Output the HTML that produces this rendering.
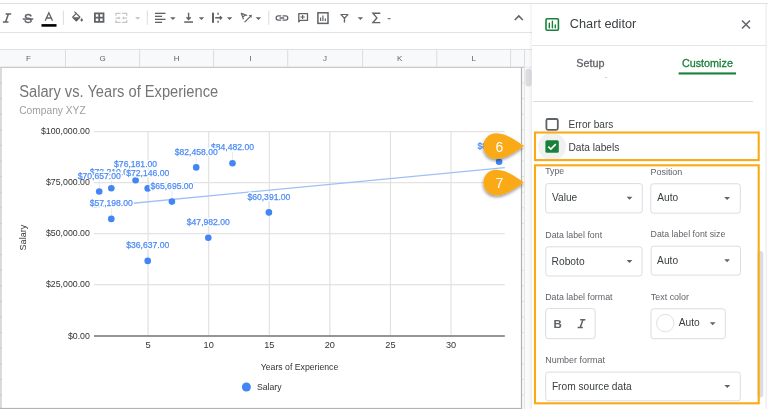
<!DOCTYPE html>
<html><head><meta charset="utf-8"><style>
html,body{margin:0;padding:0;width:768px;height:409px;overflow:hidden;background:#fff}
svg{display:block;will-change:transform;font-family:"Liberation Sans", sans-serif}
</style></head><body>
<svg width="768" height="409" viewBox="0 0 768 409">
<rect x="0" y="0" width="768" height="409" fill="#fff"/>
<rect x="0" y="3" width="768" height="1" fill="#dfe1e5"/>
<rect x="0" y="32" width="532" height="1" fill="#e3e3e3"/>
<rect x="0" y="49" width="532" height="1" fill="#e0e0e0"/>
<rect x="0" y="50" width="532" height="17" fill="#f8f9fa"/>
<rect x="0" y="66.8" width="524.5" height="1" fill="#b8b8b8"/>
<rect x="0" y="67.8" width="522" height="1" fill="#d0d0d0"/>
<rect x="524.5" y="66.8" width="8" height="1" fill="#e6e6e6"/>
<rect x="65.0" y="50" width="1" height="17" fill="#dadce0"/>
<rect x="139.1" y="50" width="1" height="17" fill="#dadce0"/>
<rect x="213.1" y="50" width="1" height="17" fill="#dadce0"/>
<rect x="287.2" y="50" width="1" height="17" fill="#dadce0"/>
<rect x="362.1" y="50" width="1" height="17" fill="#dadce0"/>
<rect x="436.3" y="50" width="1" height="17" fill="#dadce0"/>
<rect x="510.1" y="50" width="1" height="17" fill="#dadce0"/>
<rect x="524.0" y="50" width="1" height="17" fill="#dadce0"/>
<text x="28.4" y="61.2" font-size="8" fill="#5f6368" text-anchor="middle">F</text>
<text x="102.5" y="61.2" font-size="8" fill="#5f6368" text-anchor="middle">G</text>
<text x="176.6" y="61.2" font-size="8" fill="#5f6368" text-anchor="middle">H</text>
<text x="250.6" y="61.2" font-size="8" fill="#5f6368" text-anchor="middle">I</text>
<text x="325.1" y="61.2" font-size="8" fill="#5f6368" text-anchor="middle">J</text>
<text x="399.7" y="61.2" font-size="8" fill="#5f6368" text-anchor="middle">K</text>
<text x="473.7" y="61.2" font-size="8" fill="#5f6368" text-anchor="middle">L</text>
<rect x="522" y="68" width="10" height="341" fill="#fafafa"/>
<rect x="522" y="82.5" width="2.5" height="1" fill="#e2e2e2"/>
<rect x="522" y="98.1" width="2.5" height="1" fill="#e2e2e2"/>
<rect x="522" y="113.7" width="2.5" height="1" fill="#e2e2e2"/>
<rect x="522" y="129.3" width="2.5" height="1" fill="#e2e2e2"/>
<rect x="522" y="144.9" width="2.5" height="1" fill="#e2e2e2"/>
<rect x="522" y="160.5" width="2.5" height="1" fill="#e2e2e2"/>
<rect x="522" y="176.1" width="2.5" height="1" fill="#e2e2e2"/>
<rect x="522" y="191.7" width="2.5" height="1" fill="#e2e2e2"/>
<rect x="522" y="207.3" width="2.5" height="1" fill="#e2e2e2"/>
<rect x="522" y="222.9" width="2.5" height="1" fill="#e2e2e2"/>
<rect x="522" y="238.5" width="2.5" height="1" fill="#e2e2e2"/>
<rect x="522" y="254.1" width="2.5" height="1" fill="#e2e2e2"/>
<rect x="522" y="269.7" width="2.5" height="1" fill="#e2e2e2"/>
<rect x="522" y="285.3" width="2.5" height="1" fill="#e2e2e2"/>
<rect x="522" y="300.9" width="2.5" height="1" fill="#e2e2e2"/>
<rect x="522" y="316.5" width="2.5" height="1" fill="#e2e2e2"/>
<rect x="522" y="332.1" width="2.5" height="1" fill="#e2e2e2"/>
<rect x="522" y="347.7" width="2.5" height="1" fill="#e2e2e2"/>
<rect x="522" y="363.3" width="2.5" height="1" fill="#e2e2e2"/>
<rect x="522" y="378.9" width="2.5" height="1" fill="#e2e2e2"/>
<rect x="522" y="394.5" width="2.5" height="1" fill="#e2e2e2"/>
<rect x="522" y="410.1" width="2.5" height="1" fill="#e2e2e2"/>
<rect x="524" y="68" width="1" height="341" fill="#e6e6e6"/>
<rect x="525.4" y="68.8" width="6.2" height="17.8" rx="3" fill="#dadce0"/>
<rect x="0" y="68" width="522" height="341" fill="#fff"/>
<rect x="0" y="67.8" width="1.9" height="341.2" fill="#d9d9d9"/>
<rect x="0" y="82.5" width="1.9" height="1" fill="#c9c9c9"/>
<rect x="0" y="98.1" width="1.9" height="1" fill="#c9c9c9"/>
<rect x="0" y="113.7" width="1.9" height="1" fill="#c9c9c9"/>
<rect x="0" y="129.3" width="1.9" height="1" fill="#c9c9c9"/>
<rect x="0" y="144.9" width="1.9" height="1" fill="#c9c9c9"/>
<rect x="0" y="160.5" width="1.9" height="1" fill="#c9c9c9"/>
<rect x="0" y="176.1" width="1.9" height="1" fill="#c9c9c9"/>
<rect x="0" y="191.7" width="1.9" height="1" fill="#c9c9c9"/>
<rect x="0" y="207.3" width="1.9" height="1" fill="#c9c9c9"/>
<rect x="0" y="222.9" width="1.9" height="1" fill="#c9c9c9"/>
<rect x="0" y="238.5" width="1.9" height="1" fill="#c9c9c9"/>
<rect x="0" y="254.1" width="1.9" height="1" fill="#c9c9c9"/>
<rect x="0" y="269.7" width="1.9" height="1" fill="#c9c9c9"/>
<rect x="0" y="285.3" width="1.9" height="1" fill="#c9c9c9"/>
<rect x="0" y="300.9" width="1.9" height="1" fill="#c9c9c9"/>
<rect x="0" y="316.5" width="1.9" height="1" fill="#c9c9c9"/>
<rect x="0" y="332.1" width="1.9" height="1" fill="#c9c9c9"/>
<rect x="0" y="347.7" width="1.9" height="1" fill="#c9c9c9"/>
<rect x="0" y="363.3" width="1.9" height="1" fill="#c9c9c9"/>
<rect x="0" y="378.9" width="1.9" height="1" fill="#c9c9c9"/>
<rect x="0" y="394.5" width="1.9" height="1" fill="#c9c9c9"/>
<rect x="0" y="410.1" width="1.9" height="1" fill="#c9c9c9"/>
<rect x="520.9" y="67.8" width="1.2" height="341.2" fill="#b2b2b2"/>
<rect x="0" y="407.9" width="522" height="1.1" fill="#b4b4b4"/>
<text x="19.2" y="97.3" font-size="16" fill="#757575" textLength="199" lengthAdjust="spacingAndGlyphs">Salary vs. Years of Experience</text>
<text x="19.2" y="114.3" font-size="11" fill="#9e9e9e" textLength="66.5" lengthAdjust="spacingAndGlyphs">Company XYZ</text>
<rect x="94" y="131.0" width="410.8" height="1.2" fill="#e2e2e2"/>
<rect x="94" y="182.05" width="410.8" height="1.2" fill="#e2e2e2"/>
<rect x="94" y="233.05" width="410.8" height="1.2" fill="#e2e2e2"/>
<rect x="94" y="284.09999999999997" width="410.8" height="1.2" fill="#e2e2e2"/>
<rect x="147.50" y="131.6" width="1.2" height="204" fill="#e2e2e2"/>
<rect x="208.09" y="131.6" width="1.2" height="204" fill="#e2e2e2"/>
<rect x="268.68" y="131.6" width="1.2" height="204" fill="#e2e2e2"/>
<rect x="329.27" y="131.6" width="1.2" height="204" fill="#e2e2e2"/>
<rect x="389.86" y="131.6" width="1.2" height="204" fill="#e2e2e2"/>
<rect x="450.45" y="131.6" width="1.2" height="204" fill="#e2e2e2"/>
<rect x="94" y="335.1" width="410.8" height="1.8" fill="#8a8a8a"/>
<line x1="94" y1="207.0" x2="504.8" y2="167.6" stroke="#9fc0f6" stroke-width="1.3"/>
<rect x="98.8" y="180.5" width="0.8" height="8" fill="#e4e4e4"/>
<rect x="110.9" y="177.3" width="0.8" height="8" fill="#e4e4e4"/>
<rect x="135.2" y="169.2" width="0.8" height="8" fill="#e4e4e4"/>
<rect x="147.3" y="177.4" width="0.8" height="8" fill="#e4e4e4"/>
<rect x="171.5" y="190.6" width="0.8" height="8" fill="#e4e4e4"/>
<rect x="110.9" y="207.9" width="0.8" height="8" fill="#e4e4e4"/>
<rect x="195.8" y="156.4" width="0.8" height="8" fill="#e4e4e4"/>
<rect x="232.1" y="152.3" width="0.8" height="8" fill="#e4e4e4"/>
<rect x="147.3" y="249.9" width="0.8" height="8" fill="#e4e4e4"/>
<rect x="207.9" y="226.8" width="0.8" height="8" fill="#e4e4e4"/>
<rect x="268.5" y="201.4" width="0.8" height="8" fill="#e4e4e4"/>
<rect x="498.7" y="150.8" width="0.8" height="8" fill="#e4e4e4"/>
<circle cx="99.2" cy="191.5" r="3.3" fill="#4285f4"/>
<circle cx="111.3" cy="188.3" r="3.3" fill="#4285f4"/>
<circle cx="135.6" cy="180.2" r="3.3" fill="#4285f4"/>
<circle cx="147.7" cy="188.4" r="3.3" fill="#4285f4"/>
<circle cx="171.9" cy="201.6" r="3.3" fill="#4285f4"/>
<circle cx="111.3" cy="218.9" r="3.3" fill="#4285f4"/>
<circle cx="196.2" cy="167.4" r="3.3" fill="#4285f4"/>
<circle cx="232.5" cy="163.3" r="3.3" fill="#4285f4"/>
<circle cx="147.7" cy="260.9" r="3.3" fill="#4285f4"/>
<circle cx="208.3" cy="237.8" r="3.3" fill="#4285f4"/>
<circle cx="268.9" cy="212.4" r="3.3" fill="#4285f4"/>
<circle cx="499.1" cy="161.8" r="3.3" fill="#4285f4"/>
<text x="111.3" y="175.4" font-size="9.5" fill="#fff" text-anchor="middle" textLength="43" lengthAdjust="spacingAndGlyphs" stroke="#fff" stroke-width="3" stroke-linejoin="round">$72,210.00</text>
<text x="111.3" y="175.4" font-size="9.5" fill="#4c8bf4" text-anchor="middle" textLength="43" lengthAdjust="spacingAndGlyphs" stroke="#4c8bf4" stroke-width="0.25">$72,210.00</text>
<text x="232.5" y="150.4" font-size="9.5" fill="#fff" text-anchor="middle" textLength="43" lengthAdjust="spacingAndGlyphs" stroke="#fff" stroke-width="3" stroke-linejoin="round">$84,482.00</text>
<text x="232.5" y="150.4" font-size="9.5" fill="#4c8bf4" text-anchor="middle" textLength="43" lengthAdjust="spacingAndGlyphs" stroke="#4c8bf4" stroke-width="0.25">$84,482.00</text>
<text x="99.2" y="178.6" font-size="9.5" fill="#fff" text-anchor="middle" textLength="43" lengthAdjust="spacingAndGlyphs" stroke="#fff" stroke-width="3" stroke-linejoin="round">$70,657.00</text>
<text x="99.2" y="178.6" font-size="9.5" fill="#4c8bf4" text-anchor="middle" textLength="43" lengthAdjust="spacingAndGlyphs" stroke="#4c8bf4" stroke-width="0.25">$70,657.00</text>
<text x="147.7" y="175.5" font-size="9.5" fill="#fff" text-anchor="middle" textLength="43" lengthAdjust="spacingAndGlyphs" stroke="#fff" stroke-width="3" stroke-linejoin="round">$72,146.00</text>
<text x="147.7" y="175.5" font-size="9.5" fill="#4c8bf4" text-anchor="middle" textLength="43" lengthAdjust="spacingAndGlyphs" stroke="#4c8bf4" stroke-width="0.25">$72,146.00</text>
<text x="135.6" y="167.3" font-size="9.5" fill="#fff" text-anchor="middle" textLength="43" lengthAdjust="spacingAndGlyphs" stroke="#fff" stroke-width="3" stroke-linejoin="round">$76,181.00</text>
<text x="135.6" y="167.3" font-size="9.5" fill="#4c8bf4" text-anchor="middle" textLength="43" lengthAdjust="spacingAndGlyphs" stroke="#4c8bf4" stroke-width="0.25">$76,181.00</text>
<text x="171.9" y="188.7" font-size="9.5" fill="#fff" text-anchor="middle" textLength="43" lengthAdjust="spacingAndGlyphs" stroke="#fff" stroke-width="3" stroke-linejoin="round">$65,695.00</text>
<text x="171.9" y="188.7" font-size="9.5" fill="#4c8bf4" text-anchor="middle" textLength="43" lengthAdjust="spacingAndGlyphs" stroke="#4c8bf4" stroke-width="0.25">$65,695.00</text>
<text x="111.3" y="206.0" font-size="9.5" fill="#fff" text-anchor="middle" textLength="43" lengthAdjust="spacingAndGlyphs" stroke="#fff" stroke-width="3" stroke-linejoin="round">$57,198.00</text>
<text x="111.3" y="206.0" font-size="9.5" fill="#4c8bf4" text-anchor="middle" textLength="43" lengthAdjust="spacingAndGlyphs" stroke="#4c8bf4" stroke-width="0.25">$57,198.00</text>
<text x="196.2" y="154.5" font-size="9.5" fill="#fff" text-anchor="middle" textLength="43" lengthAdjust="spacingAndGlyphs" stroke="#fff" stroke-width="3" stroke-linejoin="round">$82,458.00</text>
<text x="196.2" y="154.5" font-size="9.5" fill="#4c8bf4" text-anchor="middle" textLength="43" lengthAdjust="spacingAndGlyphs" stroke="#4c8bf4" stroke-width="0.25">$82,458.00</text>
<text x="147.7" y="248.0" font-size="9.5" fill="#fff" text-anchor="middle" textLength="43" lengthAdjust="spacingAndGlyphs" stroke="#fff" stroke-width="3" stroke-linejoin="round">$36,637.00</text>
<text x="147.7" y="248.0" font-size="9.5" fill="#4c8bf4" text-anchor="middle" textLength="43" lengthAdjust="spacingAndGlyphs" stroke="#4c8bf4" stroke-width="0.25">$36,637.00</text>
<text x="208.3" y="224.9" font-size="9.5" fill="#fff" text-anchor="middle" textLength="43" lengthAdjust="spacingAndGlyphs" stroke="#fff" stroke-width="3" stroke-linejoin="round">$47,982.00</text>
<text x="208.3" y="224.9" font-size="9.5" fill="#4c8bf4" text-anchor="middle" textLength="43" lengthAdjust="spacingAndGlyphs" stroke="#4c8bf4" stroke-width="0.25">$47,982.00</text>
<text x="268.9" y="199.5" font-size="9.5" fill="#fff" text-anchor="middle" textLength="43" lengthAdjust="spacingAndGlyphs" stroke="#fff" stroke-width="3" stroke-linejoin="round">$60,391.00</text>
<text x="268.9" y="199.5" font-size="9.5" fill="#4c8bf4" text-anchor="middle" textLength="43" lengthAdjust="spacingAndGlyphs" stroke="#4c8bf4" stroke-width="0.25">$60,391.00</text>
<text x="499.1" y="148.9" font-size="9.5" fill="#fff" text-anchor="middle" textLength="43" lengthAdjust="spacingAndGlyphs" stroke="#fff" stroke-width="3" stroke-linejoin="round">$85,196.00</text>
<text x="499.1" y="148.9" font-size="9.5" fill="#4c8bf4" text-anchor="middle" textLength="43" lengthAdjust="spacingAndGlyphs" stroke="#4c8bf4" stroke-width="0.25">$85,196.00</text>
<text x="89.9" y="134.2" font-size="9.6" fill="#333" text-anchor="end" textLength="49" lengthAdjust="spacingAndGlyphs">$100,000.00</text>
<text x="89.9" y="185.3" font-size="9.6" fill="#333" text-anchor="end" textLength="44" lengthAdjust="spacingAndGlyphs">$75,000.00</text>
<text x="89.9" y="236.3" font-size="9.6" fill="#333" text-anchor="end" textLength="44" lengthAdjust="spacingAndGlyphs">$50,000.00</text>
<text x="89.9" y="287.4" font-size="9.6" fill="#333" text-anchor="end" textLength="44" lengthAdjust="spacingAndGlyphs">$25,000.00</text>
<text x="89.9" y="338.7" font-size="9.6" fill="#333" text-anchor="end" textLength="22" lengthAdjust="spacingAndGlyphs">$0.00</text>
<text x="148.1" y="347.9" font-size="9.4" fill="#333" text-anchor="middle">5</text>
<text x="208.69" y="347.9" font-size="9.4" fill="#333" text-anchor="middle" textLength="10.2" lengthAdjust="spacingAndGlyphs">10</text>
<text x="269.28" y="347.9" font-size="9.4" fill="#333" text-anchor="middle" textLength="10.2" lengthAdjust="spacingAndGlyphs">15</text>
<text x="329.87" y="347.9" font-size="9.4" fill="#333" text-anchor="middle" textLength="10.2" lengthAdjust="spacingAndGlyphs">20</text>
<text x="390.46" y="347.9" font-size="9.4" fill="#333" text-anchor="middle" textLength="10.2" lengthAdjust="spacingAndGlyphs">25</text>
<text x="451.05" y="347.9" font-size="9.4" fill="#333" text-anchor="middle" textLength="10.2" lengthAdjust="spacingAndGlyphs">30</text>
<text x="299.5" y="369.5" font-size="9.6" fill="#333" text-anchor="middle" textLength="77.5" lengthAdjust="spacingAndGlyphs">Years of Experience</text>
<text x="0" y="0" font-size="9.6" fill="#333" text-anchor="middle" textLength="25.6" lengthAdjust="spacingAndGlyphs" transform="translate(25.7 237.6) rotate(-90)">Salary</text>
<circle cx="246.4" cy="387" r="4.5" fill="#4285f4"/>
<text x="256.9" y="389.8" font-size="9.6" fill="#333" textLength="24.6" lengthAdjust="spacingAndGlyphs">Salary</text>
<path d="M5.6 13.9h5.6M2.9 22.1h5.6M8.4 13.9l-2.8 8.2" stroke="#5f6368" stroke-width="1.5" fill="none"/>
<text x="28" y="22.8" font-size="12.3" fill="#5f6368" stroke="#5f6368" stroke-width="0.45" text-anchor="middle">S</text>
<rect x="22.8" y="18.3" width="10.4" height="1.5" fill="#5f6368"/>
<path d="M45.2 20.7l3.65-7.9 3.65 7.9M46.5 18h4.7" stroke="#5f6368" stroke-width="1.3" fill="none"/>
<rect x="41.5" y="24.1" width="15" height="2.6" fill="#000"/>
<rect x="62.9" y="10.5" width="1" height="14.3" fill="#dadce0"/>
<rect x="146.8" y="10.5" width="1" height="14.3" fill="#dadce0"/>
<rect x="268.3" y="10.5" width="1" height="14.3" fill="#dadce0"/>
<path fill-rule="evenodd" d="M16.56 8.94L7.62 0 6.21 1.41l2.38 2.38-5.15 5.15c-.59.59-.59 1.54 0 2.12l5.5 5.5c.29.29.68.44 1.06.44s.77-.15 1.06-.44l5.5-5.5c.59-.58.59-1.53 0-2.12zM5.21 10L10 5.21 14.79 10H5.21zM19 11.5s-2 2.170-2 3.5c0 1.1.9 2 2 2s2-.9 2-2c0-1.33-2-3.5-2-3.5z" fill="#5f6368" transform="translate(70.3 11.2) scale(0.6)"/>
<path d="M94.9 13.4h8.6v8.4h-8.6zM99.2 13.4v8.4M94.9 17.6h8.6" stroke="#5f6368" stroke-width="1.8" fill="none"/>
<path d="M115.9 15.8v-2.4h4.7M122.1 13.4h4.6v2.4M126.7 20v2.3h-4.6M120.6 22.3h-4.7V20M115.5 18h3.6M127 18h-3.6" stroke="#c4c6c8" stroke-width="1.25" fill="none"/>
<path d="M118.6 16.3l2 1.7-2 1.7zM123.9 16.3l-2 1.7 2 1.7z" fill="#c4c6c8"/>
<path d="M135.1 17l2.55 2.7 2.55-2.7z" fill="#c4c6c8"/>
<rect x="155" y="12.700000000000001" width="10.5" height="1.3" fill="#5f6368"/>
<rect x="155" y="15.700000000000001" width="7.099999999999994" height="1.3" fill="#5f6368"/>
<rect x="155" y="18.7" width="10.5" height="1.3" fill="#5f6368"/>
<rect x="155" y="21.7" width="7.099999999999994" height="1.3" fill="#5f6368"/>
<path d="M170.2 17.2h5.4l-2.7 2.7z" fill="#5f6368"/>
<path d="M198.8 17.2h5.4l-2.7 2.7z" fill="#5f6368"/>
<path d="M226.9 17.2h5.4l-2.7 2.7z" fill="#5f6368"/>
<path d="M255.7 17.2h5.4l-2.7 2.7z" fill="#5f6368"/>
<path d="M357.7 17.2h5.4l-2.7 2.7z" fill="#5f6368"/>
<path d="M387 18h4.3l-2.15 1.8z" fill="#80868b"/>
<path d="M188.6 12.7v6M186.5 17.2l2.1 2.3 2.1-2.3" stroke="#5f6368" stroke-width="1.4" fill="none"/>
<rect x="184.2" y="21.3" width="8.8" height="1.5" fill="#5f6368"/>
<rect x="212" y="12.7" width="2" height="10.1" fill="#5f6368"/>
<path d="M218.1 12.7v2M218.1 20.8v2M215.2 17.8h6.3M219.9 16.2l1.7 1.6-1.7 1.6" stroke="#5f6368" stroke-width="1.4" fill="none"/>
<path d="M243.5 19.3L241.3 13.4 247.2 15.5M242.6 16.9l2.5-1.6M244.6 22.2l5.6-5.6" stroke="#5f6368" stroke-width="1.2" fill="none" stroke-linejoin="round"/>
<path d="M251.9 14.7l-3.3.5 2.8 2.8z" fill="#5f6368"/>
<path d="M281.2 15.95H278.2a2.05 2.05 0 0 0 0 4.1H281.2M282.6 15.95H285.7a2.05 2.05 0 0 1 0 4.1H282.6M279.6 18H284.2" stroke="#5f6368" stroke-width="1.3" fill="none"/>
<path d="M298.8 13.7h8.7v6.6h-7.3l-1.4 1.6z" stroke="#5f6368" stroke-width="1.3" fill="none" stroke-linejoin="round"/>
<path d="M302.6 14.9v4.2M300.4 17h4.4" stroke="#5f6368" stroke-width="1.2" fill="none"/>
<rect x="317.9" y="12.8" width="10.1" height="10.6" fill="none" stroke="#5f6368" stroke-width="1.5"/>
<path d="M320.6 17.6v3.3M322.9 15.6v5.3M325.3 18.4v2.5" stroke="#5f6368" stroke-width="1.2" fill="none"/>
<path d="M341 14.5h6.9l-3.45 3.9z" stroke="#5f6368" stroke-width="1.2" fill="none" stroke-linejoin="round"/>
<path d="M344.45 18.3v4.2" stroke="#5f6368" stroke-width="1.4" fill="none"/>
<path d="M380.3 13.2h-7.4l4 4.7-4 4.7h7.4" stroke="#5f6368" stroke-width="1.4" fill="none"/>
<path d="M514.8 20l4-4 4 4" stroke="#5f6368" stroke-width="1.6" fill="none"/>
<defs><linearGradient id="sh" x1="0" x2="1"><stop offset="0" stop-color="#000" stop-opacity="0"/><stop offset="1" stop-color="#000" stop-opacity="0.05"/></linearGradient><filter id="ds" x="-30%" y="-30%" width="160%" height="170%"><feDropShadow dx="-0.4" dy="1.8" stdDeviation="1.4" flood-color="#000" flood-opacity="0.42"/></filter></defs>
<rect x="528.5" y="3.5" width="3.5" height="406" fill="url(#sh)"/>
<rect x="532" y="4" width="236" height="405" fill="#fff"/>
<rect x="765.6" y="4" width="1.1" height="405" fill="#e8eaed"/>
<rect x="546" y="18.7" width="12.4" height="11.6" rx="1.2" fill="none" stroke="#188038" stroke-width="1.6"/>
<path d="M549.3 23.2v4.6M552.4 21.3v6.5M555.3 25v2.8" stroke="#188038" stroke-width="1.4" fill="none" stroke-linecap="round"/>
<text x="569.8" y="27.8" font-size="12" fill="#3c4043" textLength="66.5" lengthAdjust="spacingAndGlyphs">Chart editor</text>
<path d="M742 20.5l8 8M750 20.5l-8 8" stroke="#5f6368" stroke-width="1.5" fill="none"/>
<rect x="532" y="45" width="234" height="1" fill="#e3e5e8"/>
<text x="576.3" y="66.7" font-size="11.5" fill="#5f6368" textLength="28.2" lengthAdjust="spacingAndGlyphs" stroke="#5f6368" stroke-width="0.3">Setup</text>
<rect x="605.5" y="77" width="1" height="1" fill="#9aa0a6"/>
<text x="681.9" y="66.7" font-size="11.5" fill="#188038" textLength="51" lengthAdjust="spacingAndGlyphs" stroke="#188038" stroke-width="0.3">Customize</text>
<rect x="678.6" y="72.4" width="57.4" height="2.1" fill="#188038"/>
<rect x="533" y="101" width="220" height="1" fill="#dadce0"/>
<rect x="757.5" y="251" width="5.8" height="146.4" rx="2.9" fill="#dadce0"/>
<rect x="546.4" y="119" width="11.4" height="10.8" rx="1.5" fill="none" stroke="#5f6368" stroke-width="1.8"/>
<text x="568.5" y="128.2" font-size="11" fill="#3c4043" textLength="44.8" lengthAdjust="spacingAndGlyphs">Error bars</text>
<circle cx="552.1" cy="146.6" r="14" fill="#f0f1f1"/>
<rect x="545.4" y="140.2" width="13.4" height="12.6" rx="1.6" fill="#188038"/>
<path d="M548.3 146.6l2.6 2.5 4.9-5" stroke="#fff" stroke-width="1.6" fill="none"/>
<text x="568.5" y="150.5" font-size="11" fill="#3c4043" textLength="50.8" lengthAdjust="spacingAndGlyphs">Data labels</text>
<text x="545.2" y="174.4" font-size="9" fill="#5f6368" textLength="18.9" lengthAdjust="spacingAndGlyphs">Type</text>
<text x="650.5" y="174.7" font-size="9" fill="#5f6368" textLength="31.8" lengthAdjust="spacingAndGlyphs">Position</text>
<rect x="545.7" y="183.6" width="96.59999999999991" height="29.30000000000001" rx="2.5" fill="#fff" stroke="#dadce0" stroke-width="1"/>
<text x="552" y="201.4" font-size="11" fill="#3c4043" textLength="25.2" lengthAdjust="spacingAndGlyphs">Value</text>
<path d="M626.6 196.8h5.8l-2.9 3z" fill="#5f6368"/>
<rect x="650.8" y="183.8" width="89.5" height="29.399999999999977" rx="2.5" fill="#fff" stroke="#dadce0" stroke-width="1"/>
<text x="657.2" y="200.8" font-size="11" fill="#3c4043" textLength="21" lengthAdjust="spacingAndGlyphs">Auto</text>
<path d="M724.2 197.1h5.8l-2.9 3z" fill="#5f6368"/>
<text x="545.3" y="238" font-size="9" fill="#5f6368" textLength="56.8" lengthAdjust="spacingAndGlyphs">Data label font</text>
<text x="650.6" y="237.2" font-size="9" fill="#5f6368" textLength="74.7" lengthAdjust="spacingAndGlyphs">Data label font size</text>
<rect x="545.8" y="246.8" width="96.20000000000005" height="29.19999999999999" rx="2.5" fill="#fff" stroke="#dadce0" stroke-width="1"/>
<text x="551.6" y="264.5" font-size="11" fill="#3c4043" textLength="33" lengthAdjust="spacingAndGlyphs">Roboto</text>
<path d="M626.6 260.0h5.8l-2.9 3z" fill="#5f6368"/>
<rect x="651.1" y="246.2" width="89.39999999999998" height="28.900000000000034" rx="2.5" fill="#fff" stroke="#dadce0" stroke-width="1"/>
<text x="657.1" y="263.6" font-size="11" fill="#3c4043" textLength="21" lengthAdjust="spacingAndGlyphs">Auto</text>
<path d="M724.2 259.2h5.8l-2.9 3z" fill="#5f6368"/>
<text x="545.2" y="300.3" font-size="9" fill="#5f6368" textLength="67.4" lengthAdjust="spacingAndGlyphs">Data label format</text>
<text x="650.8" y="300.3" font-size="9" fill="#5f6368" textLength="38.2" lengthAdjust="spacingAndGlyphs">Text color</text>
<rect x="545.7" y="308.6" width="49.4" height="30.1" rx="2.5" fill="#fff" stroke="#dadce0"/>
<text x="553.6" y="328" font-size="11.5" fill="#5f6368" font-weight="bold">B</text>
<path d="M580.2 319.8h5.2M577.6 327.5h5.2M583 319.8l-2.8 7.7" stroke="#5f6368" stroke-width="1.5" fill="none"/>
<rect x="651" y="308.8" width="74.3" height="29.9" rx="2.5" fill="#fff" stroke="#dadce0"/>
<circle cx="665.3" cy="323.1" r="8.7" fill="#fff" stroke="#dadce0" stroke-width="0.9"/>
<text x="678.7" y="326.2" font-size="11" fill="#3c4043" textLength="21" lengthAdjust="spacingAndGlyphs">Auto</text>
<path d="M709.8 322.3h5.8l-2.9 3z" fill="#5f6368"/>
<text x="545.2" y="363" font-size="9" fill="#5f6368" textLength="59.8" lengthAdjust="spacingAndGlyphs">Number format</text>
<rect x="545.7" y="372.1" width="194.5999999999999" height="28.69999999999999" rx="2.5" fill="#fff" stroke="#dadce0" stroke-width="1"/>
<text x="551.9" y="390" font-size="11" fill="#3c4043" textLength="79.8" lengthAdjust="spacingAndGlyphs">From source data</text>
<path d="M724.4 385.1h5.8l-2.9 3z" fill="#5f6368"/>
<rect x="535" y="132.5" width="223.7" height="27.6" fill="none" stroke="#f9aa14" stroke-width="2.1"/>
<rect x="535" y="165.3" width="223.7" height="238" fill="none" stroke="#f9aa14" stroke-width="2.1"/>
<path d="M523.8 146.1 C514.8 139.6 505.2 133.29999999999998 496.2 133.29999999999998 A12.8 12.8 0 0 0 496.2 158.9 C505.2 158.9 514.8 152.6 523.8 146.1 Z" fill="#f9aa14" filter="url(#ds)"/>
<text x="499.5" y="151.7" font-size="14" fill="#fff" text-anchor="middle">6</text>
<path d="M523.8 182.5 C514.8 176.0 505.2 169.7 496.2 169.7 A12.8 12.8 0 0 0 496.2 195.3 C505.2 195.3 514.8 189.0 523.8 182.5 Z" fill="#f9aa14" filter="url(#ds)"/>
<text x="499.5" y="188.1" font-size="14" fill="#fff" text-anchor="middle">7</text>
</svg>
</body></html>
